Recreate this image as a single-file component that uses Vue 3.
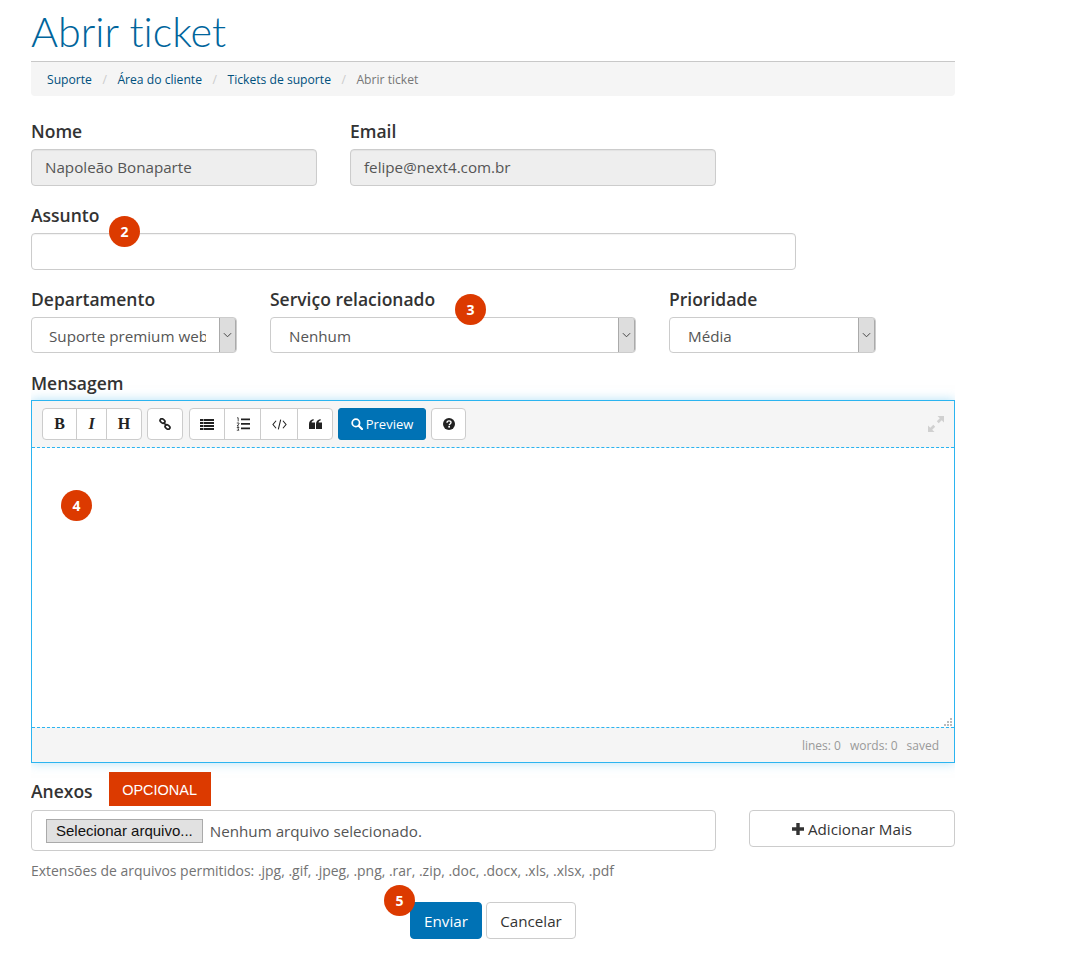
<script setup>
// Formulario "Abrir ticket" — layout em fluxo, marcadores numerados por cima dos campos
const crumbs = ['Suporte', 'Área do cliente', 'Tickets de suporte']
const selects = [
  { label: 'Departamento', value: 'Suporte premium web', cls: 'f-dept' },
  { label: 'Serviço relacionado', value: 'Nenhum', cls: 'f-serv', badge: '3' },
  { label: 'Prioridade', value: 'Média', cls: 'f-prio' },
]
</script>

<template>
  <div class="page">
    <h1 class="title">Abrir ticket</h1>
    <ul class="crumbs">
      <li v-for="c in crumbs" :key="c"><a>{{ c }}</a><span class="sep">/</span></li>
      <li class="active">Abrir ticket</li>
    </ul>

    <div class="row row-top">
      <div class="field f-name">
        <label>Nome</label>
        <div class="input disabled">Napoleão Bonaparte</div>
      </div>
      <div class="field f-mail">
        <label>Email</label>
        <div class="input disabled">felipe@next4.com.br</div>
      </div>
    </div>

    <div class="field f-subject">
      <label>Assunto</label>
      <div class="input"></div>
      <span class="badge b2">2</span>
    </div>

    <div class="row row-sel">
      <div v-for="s in selects" :key="s.label" class="field" :class="s.cls">
        <label>{{ s.label }}</label>
        <div class="select">
          <span class="sel-val">{{ s.value }}</span>
          <span class="sel-arrow">
            <svg viewBox="0 0 10 6" width="9" height="6"><path d="M1 1l4 4 4-4" fill="none" stroke="#444" stroke-width="1.1"/></svg>
          </span>
        </div>
        <span v-if="s.badge" class="badge b3">{{ s.badge }}</span>
      </div>
    </div>

    <div class="field f-msg">
      <label>Mensagem</label>
      <div class="editor">
        <div class="toolbar">
          <div class="btn-group">
            <button class="tb tb-b">B</button>
            <button class="tb tb-i">I</button>
            <button class="tb tb-h">H</button>
          </div>
          <div class="btn-group">
            <button class="tb tb-link">
              <svg viewBox="0 0 12 12" width="12" height="12"><g fill="none" stroke="#222" stroke-width="1.7"><rect x=".9" y="1.2" width="5.2" height="3.6" rx="1.8" transform="rotate(40 3.5 3)"/><rect x="5.9" y="7.2" width="5.2" height="3.6" rx="1.8" transform="rotate(40 8.5 9)"/><path d="M4.5 4.500l3 3"/></g></svg>
            </button>
          </div>
          <div class="btn-group group-list">
            <button class="tb tb-ul">
              <svg viewBox="0 0 14 11" width="14" height="11"><path d="M0 0h14v2H0zM0 3h14v2H0zM0 6h14v2H0zM0 9h14v2H0z" fill="#222"/><path d="M3 0h1v11H3z" fill="#fff" opacity=".5"/></svg>
            </button>
            <button class="tb tb-ol">
              <svg viewBox="0 0 14 14" width="14" height="14"><path d="M5 1.500h9v1.800H5zM5 6h9v1.800H5zM5 10.500h9v1.800H5z" fill="#222"/><path d="M1 .8h1.200v3.600M.8 6h2.200v.9L1 9h2M.8 10.500h2.200l-1 1.300 1 1.400H.8" fill="none" stroke="#222" stroke-width=".8"/></svg>
            </button>
            <button class="tb tb-code">
              <svg viewBox="0 0 14 10" width="15" height="11"><path d="M3.800 1.500L.9 5l2.900 3.500M10.200 1.500L13.100 5l-2.900 3.500M8.100.5L5.900 9.500" fill="none" stroke="#222" stroke-width="1"/></svg>
            </button>
            <button class="tb tb-quote">
              <svg viewBox="0 0 13 10" width="13" height="10"><path d="M0 5.200C0 2.400 1.600.6 4.600 0v1.600C3.300 2 2.700 2.700 2.600 3.600H6V10H0zM7 5.200C7 2.400 8.600.6 11.600 0v1.600c-1.300.4-1.900 1.100-2 2H13V10H7z" fill="#222"/></svg>
            </button>
          </div>
          <button class="preview">
            <svg viewBox="0 0 13 13" width="12" height="12"><circle cx="5.300" cy="5.300" r="4" fill="none" stroke="#fff" stroke-width="1.900"/><path d="M8.300 8.300l3.600 3.600" stroke="#fff" stroke-width="2.300" stroke-linecap="round"/></svg>
            <span>Preview</span>
          </button>
          <button class="tb tb-help">
            <svg viewBox="0 0 12 12" width="12" height="12"><circle cx="6" cy="6" r="6" fill="#222"/><path d="M4 4.700C4 3.500 4.900 2.900 6 2.900s2 .7 2 1.700c0 1.500-1.700 1.300-1.700 2.600" fill="none" stroke="#fff" stroke-width="1.400"/><rect x="5.300" y="8" width="1.700" height="1.600" fill="#fff"/></svg>
          </button>
          <svg class="expand" viewBox="0 0 16 16" width="16" height="16"><path d="M9.500 0H16v6.500l-2.300-2.300-3 3-1.900-1.900 3-3zM6.500 16H0V9.500l2.300 2.300 3-3 1.900 1.900-3 3z" fill="#d0d0d0"/></svg>
        </div>
        <div class="body">
          <span class="badge b4">4</span>
          <svg class="grip" viewBox="0 0 8 8" width="8" height="8"><path d="M6 0h2v2H6zM3 3h2v2H3zM6 3h2v2H6zM0 6h2v2H0zM3 6h2v2H3zM6 6h2v2H6z" fill="#bbb"/></svg>
        </div>
        <div class="status">
          <span>lines: 0</span><span>words: 0</span><span>saved</span>
        </div>
      </div>
    </div>

    <div class="attach-head">
      <label>Anexos</label>
      <span class="optional">OPCIONAL</span>
    </div>
    <div class="row row-file">
      <div class="file">
        <span class="file-btn">Selecionar arquivo...</span>
        <span class="file-name">Nenhum arquivo selecionado.</span>
      </div>
      <button class="add">
        <svg viewBox="0 0 12 12" width="12" height="12"><path d="M4.300 0h3.400v4.300H12v3.400H7.700V12H4.300V7.700H0V4.300h4.300z" fill="#333"/></svg>
        Adicionar Mais
      </button>
    </div>
    <p class="hint">Extensões de arquivos permitidos: .jpg, .gif, .jpeg, .png, .rar, .zip, .doc, .docx, .xls, .xlsx, .pdf</p>

    <div class="actions">
      <div class="send-wrap">
        <button class="send">Enviar</button>
        <span class="badge b5">5</span>
      </div>
      <button class="cancel">Cancelar</button>
    </div>
  </div>
</template>

<style>
html, body { background: #fff; }
</style>

<style scoped>
.page {
  width: 924px;
  height: 967px;
  box-sizing: border-box;
  margin-left: 31px;
  font-family: "Open Sans", "Liberation Sans", sans-serif;
  font-size: 15.2px;
  color: #555;
  overflow: hidden;
}
.title {
  margin: 0;
  height: 61px;
  padding-top: 8px;
  box-sizing: border-box;
  font-family: Lato, "Open Sans", sans-serif;
  font-weight: 300;
  font-size: 41.3px;
  line-height: 46px;
  font-variant-ligatures: none;
  color: #00659c;
}
.crumbs {
  display: flex;
  align-items: center;
  margin: 0;
  padding: 0 16px;
  height: 35px;
  box-sizing: border-box;
  list-style: none;
  background: #f5f5f5;
  border-top: 1px solid #c8c8c8;
  border-radius: 0 0 4px 4px;
  font-size: 12.15px;
}
.crumbs a { color: #00507d; }
.crumbs .sep { color: #ccc; padding: 0 10.5px; }
.crumbs .active { color: #777; }

label {
  display: block;
  padding-top: 1px;
  font-size: 17.5px;
  font-weight: 600;
  line-height: 20px;
  color: #333;
}
.field { position: relative; }
.row { display: flex; }
.row-top { gap: 33px; margin-top: 24px; }
.f-name { width: 286px; }
.f-mail { width: 366px; }
.field label { margin-bottom: 8px; }

.input {
  height: 37px;
  box-sizing: border-box;
  padding: 0 13px;
  border: 1px solid #ccc;
  border-radius: 4px;
  background: #fff;
  box-shadow: inset 0 1px 1px rgba(0, 0, 0, .05);
  line-height: 35px;
  color: #555;
}
.input.disabled { background: #eee; }

.f-subject { width: 765px; margin-top: 18px; }
.b2 { left: 78px; top: 12px; }

.row-sel { gap: 33px; margin-top: 18px; }
.f-dept { width: 206px; }
.f-serv { width: 366px; }
.f-prio { width: 207px; }
.select {
  display: flex;
  height: 36px;
  box-sizing: border-box;
  border: 1px solid #ccc;
  border-radius: 4px;
  background: #fff;
  overflow: hidden;
}
.sel-val {
  flex: 1;
  min-width: 0;
  margin: 0 13px 0 17px;
  overflow: hidden;
  white-space: nowrap;
  line-height: 36px;
  color: #555;
}
.f-serv .sel-val, .f-prio .sel-val { margin-left: 18px; }
.sel-arrow {
  display: flex;
  align-items: center;
  justify-content: center;
  width: 17px;
  box-sizing: border-box;
  flex: none;
  background: #ddd;
  border-left: 1px solid #aaa;
  border-right: 1px solid #aaa;
  border-radius: 0 3px 3px 0;
}
.b3 { left: 185px; top: 6px; }

.f-msg { margin-top: 19px; }
.f-msg label { margin-bottom: 7px; }
.editor {
  height: 363px;
  box-sizing: border-box;
  display: flex;
  flex-direction: column;
  border: 1px solid #2bb4f0;
  box-shadow: 0 0 10px rgba(102, 195, 240, .5);
}
.toolbar {
  position: relative;
  display: flex;
  align-items: center;
  gap: 5px;
  height: 47px;
  flex: none;
  box-sizing: border-box;
  padding: 0 10px;
  background: #f5f5f5;
  border-bottom: 1px dashed #2bb4f0;
}
.btn-group { display: flex; }
.group-list { margin-left: 1px; }
.tb {
  display: flex;
  align-items: center;
  justify-content: center;
  height: 32px;
  padding: 0;
  box-sizing: border-box;
  background: #fff;
  border: 1px solid #ccc;
  margin-left: -1px;
  border-radius: 0;
  color: #222;
  font-family: "Liberation Serif", serif;
  font-size: 16px;
  font-weight: 700;
}
.btn-group .tb:first-child { margin-left: 0; border-radius: 4px 0 0 4px; }
.btn-group .tb:last-child { border-radius: 0 4px 4px 0; }
.btn-group .tb:only-child { border-radius: 4px; }
.tb-b { width: 35px; }
.tb-i { width: 31px; font-style: italic; }
.tb-h { width: 36px; }
.tb-link { width: 36px; }
.tb-ul { width: 36px; }
.tb-ol { width: 37px; }
.tb-code { width: 38px; }
.tb-quote { width: 36px; }
.tb-help { width: 35px; border-radius: 4px; margin-left: 0; }
.preview {
  display: flex;
  align-items: center;
  justify-content: center;
  gap: 3px;
  width: 88px;
  height: 32px;
  padding: 0;
  border: 1px solid #0072b0;
  border-radius: 3px;
  background: #0072b5;
  color: #fff;
  font-family: inherit;
  font-size: 13px;
}
.expand { position: absolute; right: 10px; top: 15px; }
.body { position: relative; flex: 1; background: #fff; }
.b4 { left: 29px; top: 42px; }
.grip { position: absolute; right: 2px; bottom: 1px; }
.status {
  display: flex;
  justify-content: flex-end;
  align-items: center;
  gap: 9px;
  flex: none;
  height: 35px;
  box-sizing: border-box;
  padding: 0 15px 0 0;
  background: #f5f5f5;
  border-top: 1px dashed #2bb4f0;
  font-size: 12px;
  color: #999;
}

.attach-head {
  display: flex;
  align-items: flex-end;
  gap: 16px;
  height: 34px;
  margin-top: 9px;
}
.attach-head label { line-height: 22px; margin-bottom: 4px; }
.optional {
  display: flex;
  align-items: center;
  justify-content: center;
  width: 102px;
  height: 34px;
  padding-top: 1px;
  box-sizing: border-box;
  background: #dc3a00;
  color: #fff;
  font-family: "Liberation Sans", sans-serif;
  font-size: 14.5px;
}
.row-file { gap: 33px; align-items: flex-start; margin-top: 4px; }
.file {
  display: flex;
  align-items: center;
  gap: 7px;
  width: 685px;
  height: 41px;
  box-sizing: border-box;
  padding: 0 14px;
  border: 1px solid #ccc;
  border-radius: 4px;
  color: #555;
}
.file-btn {
  height: 24px;
  box-sizing: border-box;
  padding: 0 9px;
  line-height: 22px;
  border: 1px solid #aaa;
  background: #e1e1e1;
  color: #111;
  font-family: "Liberation Sans", sans-serif;
  font-size: 15px;
  white-space: nowrap;
}
.add {
  display: flex;
  align-items: center;
  justify-content: center;
  gap: 4px;
  width: 206px;
  height: 37px;
  padding: 0;
  background: #fff;
  border: 1px solid #ccc;
  border-radius: 4px;
  color: #333;
  font-family: inherit;
  font-size: 15.2px;
}
.hint {
  margin: 11px 0 0;
  font-size: 13.95px;
  line-height: 18px;
  color: #737373;
}
.actions {
  display: flex;
  gap: 4px;
  margin-top: 22px;
  padding-left: 379px;
}
.send-wrap { position: relative; }
.send, .cancel {
  height: 37px;
  padding: 0;
  border-radius: 4px;
  font-family: inherit;
  font-size: 15.2px;
}
.send { width: 72px; background: #0072b5; border: 1px solid #0072b5; color: #fff; display: block; }
.cancel { width: 90px; background: #fff; border: 1px solid #ccc; color: #333; }
.b5 { left: -26px; top: -17px; }

.badge {
  position: absolute;
  width: 31px;
  height: 31px;
  border-radius: 50%;
  background: #dc3a00;
  color: #fff;
  font-size: 14px;
  font-weight: 700;
  line-height: 31px;
  text-align: center;
}
</style>
